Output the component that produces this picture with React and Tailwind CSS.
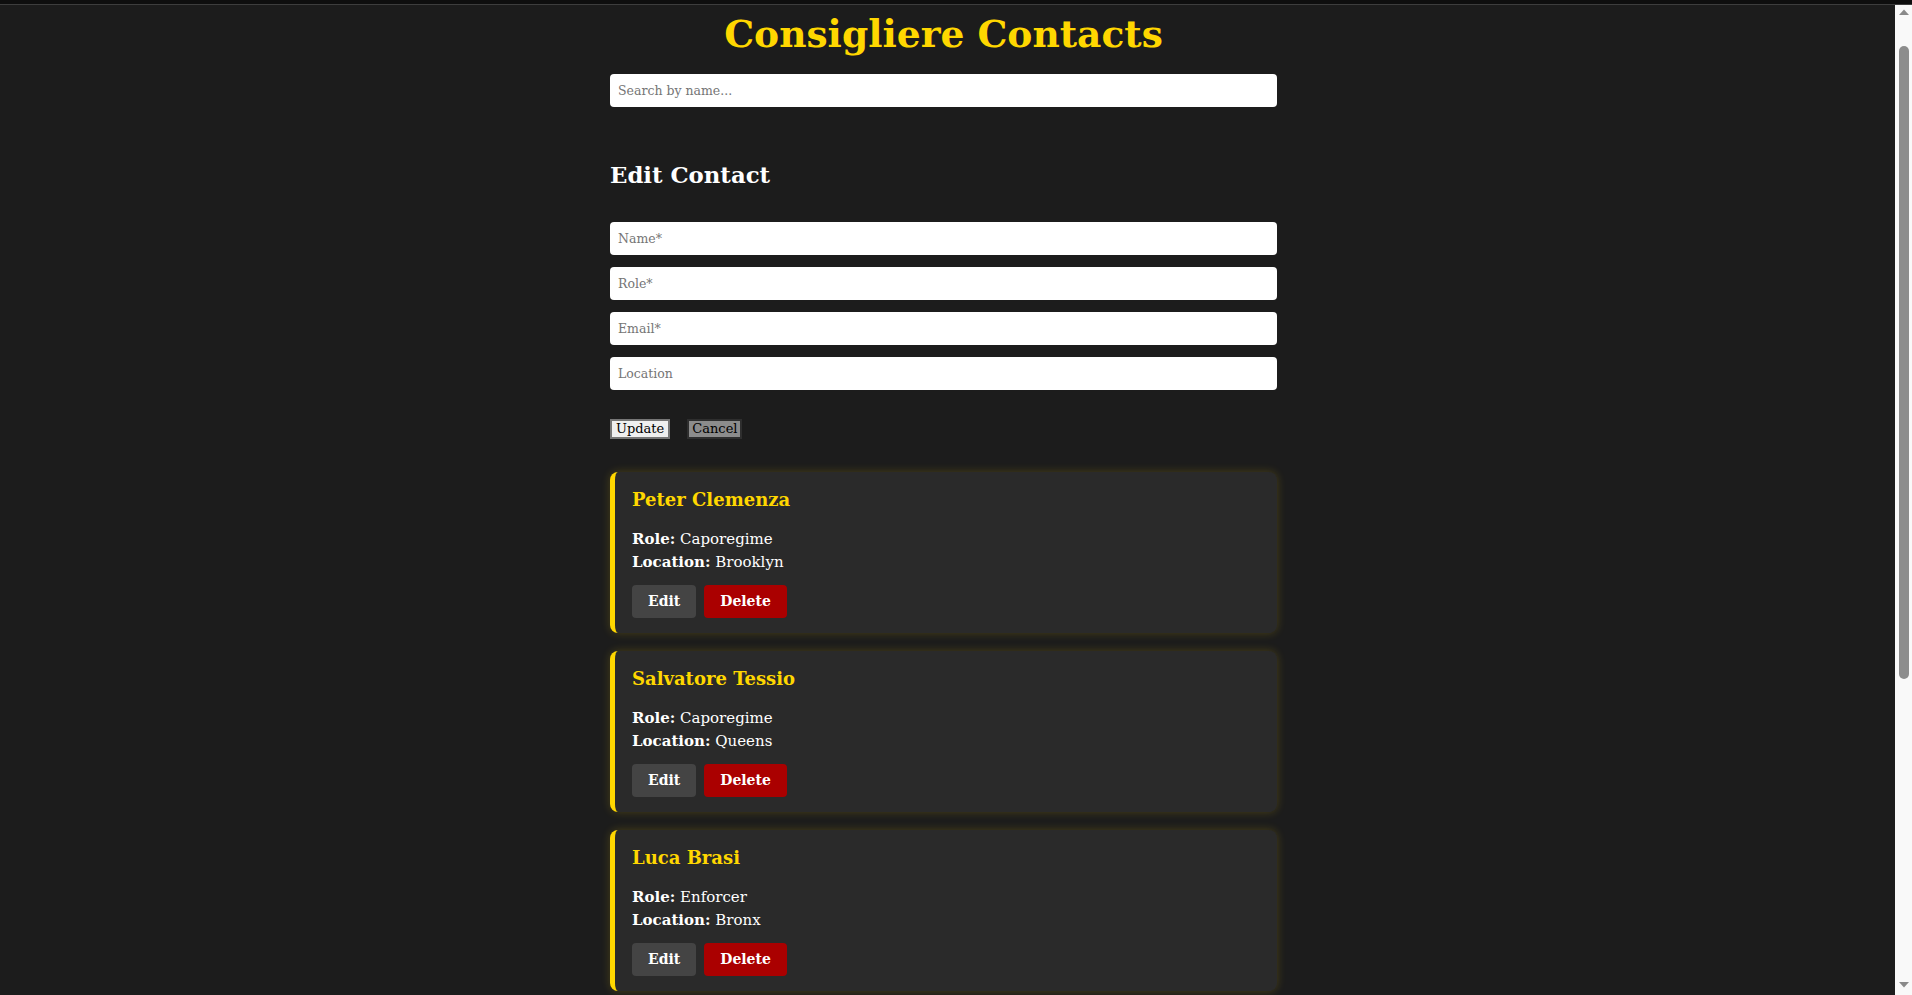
import { useState } from 'react'

const initialContacts = [
  { id: 1, name: 'Peter Clemenza', role: 'Caporegime', email: 'clemenza@corleone.com', location: 'Brooklyn' },
  { id: 2, name: 'Salvatore Tessio', role: 'Caporegime', email: 'tessio@corleone.com', location: 'Queens' },
  { id: 3, name: 'Luca Brasi', role: 'Enforcer', email: 'brasi@corleone.com', location: 'Bronx' },
  { id: 4, name: 'Tom Hagen', role: 'Consigliere', email: 'hagen@corleone.com', location: 'Manhattan' },
  { id: 5, name: 'Sonny Corleone', role: 'Underboss', email: 'sonny@corleone.com', location: 'Long Island' },
  { id: 6, name: 'Fredo Corleone', role: 'Associate', email: 'fredo@corleone.com', location: 'Las Vegas' },
]

function Scrollbar() {
  return (
    <div className="flex w-[17px] shrink-0 flex-col items-center bg-[#f9f9f9]">
      <svg width="12" height="12" viewBox="0 0 12 12" className="mt-[1px]">
        <path d="M1 9 L6 3.5 L11 9 Z" fill="#8a8a8a" />
      </svg>
      <div className="mt-[28px] h-[633px] w-[10px] rounded-full bg-[#8d8d8d]" />
      <div className="flex-1" />
      <svg width="12" height="12" viewBox="0 0 12 12" className="mb-[4px]">
        <path d="M1 3 L6 8.5 L11 3 Z" fill="#8a8a8a" />
      </svg>
    </div>
  )
}

export default function App() {
  const [contacts, setContacts] = useState(initialContacts)
  const [search, setSearch] = useState('')
  const [form, setForm] = useState({ name: '', role: '', email: '', location: '' })

  const filtered = contacts.filter((c) =>
    c.name.toLowerCase().includes(search.toLowerCase())
  )

  const handleChange = (field) => (e) => setForm({ ...form, [field]: e.target.value })

  const handleDelete = (id) => setContacts(contacts.filter((c) => c.id !== id))

  const inputClass =
    'block h-[33px] w-full rounded-[4px] bg-white px-[8px] text-[12.5px] text-black outline-none placeholder:text-[#757575]'

  return (
    <div className="flex h-screen flex-col bg-[#1c1c1c] font-['DejaVu_Serif',serif] text-white">
      <div className="h-[5px] shrink-0 border-b border-[#3d3d3d] bg-[#0e0e0e]" />

      <div className="flex min-h-0 flex-1">
        <div className="min-w-0 flex-1 overflow-hidden pr-[8px]">
          <div className="mx-auto w-[667px] pb-[4px]">
            <h1 className="pt-[4px] text-center text-[37.6px] font-bold leading-[50px] text-[#ffd700]">
              Consigliere Contacts
            </h1>

            <input
              className={`${inputClass} mt-[15px]`}
              placeholder="Search by name..."
              value={search}
              onChange={(e) => setSearch(e.target.value)}
            />

            <h2 className="mt-[53px] text-[22.8px] font-bold leading-[30px] text-white">Edit Contact</h2>

            <div className="mt-[32px] flex flex-col gap-3">
              <input className={inputClass} placeholder="Name*" value={form.name} onChange={handleChange('name')} />
              <input className={inputClass} placeholder="Role*" value={form.role} onChange={handleChange('role')} />
              <input className={inputClass} placeholder="Email*" value={form.email} onChange={handleChange('email')} />
              <input className={inputClass} placeholder="Location" value={form.location} onChange={handleChange('location')} />
            </div>

            <div className="mt-[29px] flex gap-[17px]">
              <button className="h-[20px] border-2 border-[#767676] bg-[#efefef] px-[4px] text-[13px] leading-[16px] text-black">
                Update
              </button>
              <button className="h-[20px] border-2 border-[#2e2e2e] bg-[#8c8c8c] px-[3px] text-[13px] leading-[16px] text-black">
                Cancel
              </button>
            </div>

            <div className="mt-[33px] flex flex-col gap-[18px]">
              {filtered.map((contact) => (
                <div
                  key={contact.id}
                  className="h-[161px] shrink-0 rounded-lg border-l-[5px] border-[#ffd700] bg-[#2a2a2a] pt-4 pr-4 pb-[15px] pl-[17px] shadow-[0_0_10px_rgba(255,215,0,0.2)]"
                >
                  <h3 className="text-[18px] font-bold leading-[24px] text-[#ffd700]">{contact.name}</h3>
                  <p className="mt-4 text-[15px] leading-[23px]">
                    <span className="font-bold">Role:</span> {contact.role}
                  </p>
                  <p className="text-[15px] leading-[23px]">
                    <span className="font-bold">Location:</span> {contact.location}
                  </p>
                  <div className="mt-[11px] flex gap-2">
                    <button className="h-[33px] rounded-[4px] bg-[#444444] px-4 text-[14px] font-bold text-white">
                      Edit
                    </button>
                    <button
                      onClick={() => handleDelete(contact.id)}
                      className="h-[33px] rounded-[4px] bg-[#aa0000] px-4 text-[14px] font-bold text-white"
                    >
                      Delete
                    </button>
                  </div>
                </div>
              ))}
            </div>
          </div>
        </div>

        <Scrollbar />
      </div>
    </div>
  )
}
